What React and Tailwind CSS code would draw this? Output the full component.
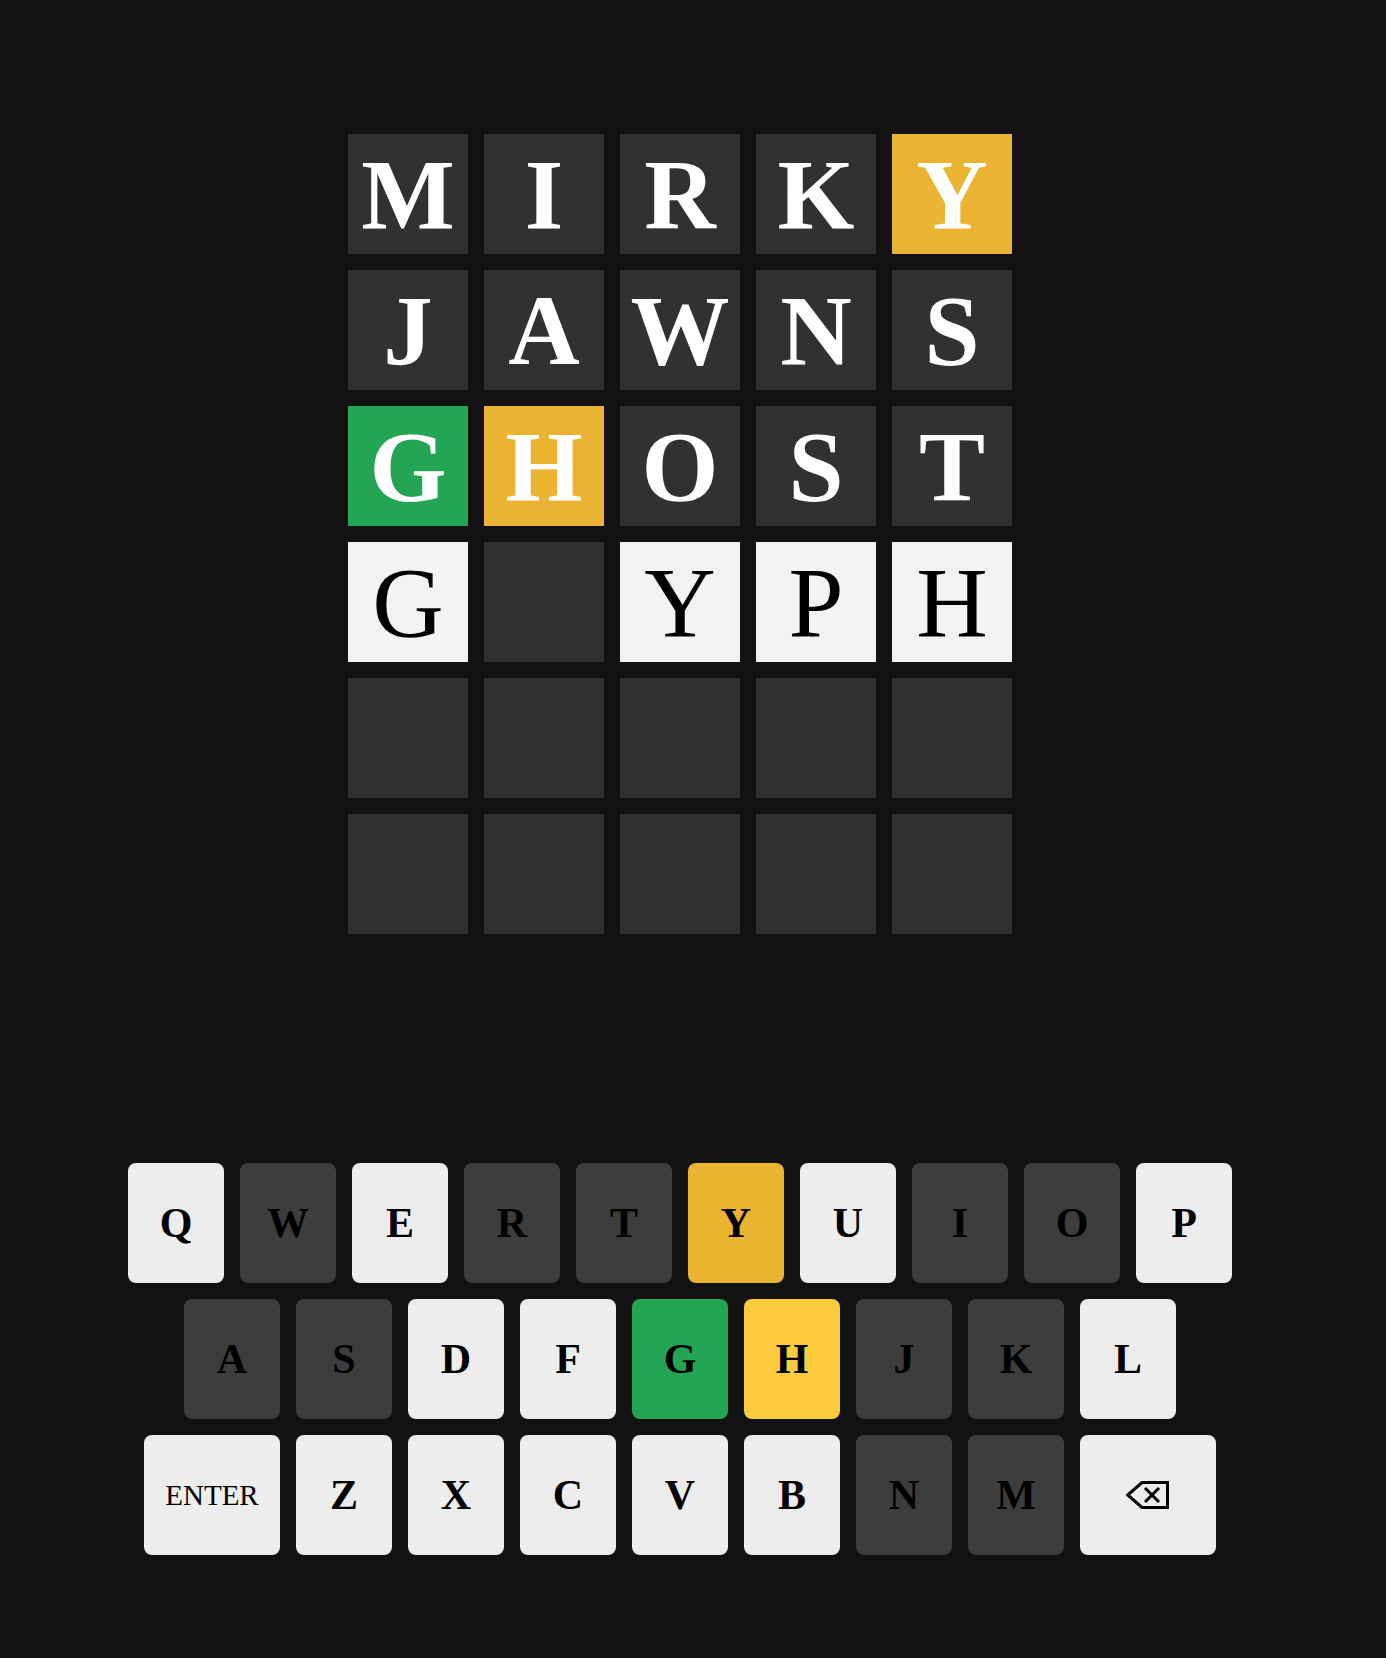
import React from "react";

const rows = [
  [["M","d"],["I","d"],["R","d"],["K","d"],["Y","y"]],
  [["J","d"],["A","d"],["W","d"],["N","d"],["S","d"]],
  [["G","g"],["H","y"],["O","d"],["S","d"],["T","d"]],
  [["G","l"],["","e"],["Y","l"],["P","l"],["H","l"]],
  [["","e"],["","e"],["","e"],["","e"],["","e"]],
  [["","e"],["","e"],["","e"],["","e"],["","e"]],
];

const tileCls = {
  d: "bg-[#313131] text-white font-bold",
  y: "bg-[#eab332] text-white font-bold",
  g: "bg-[#24a553] text-white font-bold",
  l: "bg-[#f3f3f3] text-black font-normal",
  e: "bg-[#313131]",
};

const keyCls = {
  l: "bg-[#ededed]",
  d: "bg-[#3d3d3d]",
  y: "bg-[#eab330]",
  h: "bg-[#fdcc3c]",
  g: "bg-[#24a553]",
};

const kb = [
  [["Q","l"],["W","d"],["E","l"],["R","d"],["T","d"],["Y","y"],["U","l"],["I","d"],["O","d"],["P","l"]],
  [["A","d"],["S","d"],["D","l"],["F","l"],["G","g"],["H","h"],["J","d"],["K","d"],["L","l"]],
  [["ENTER","l"],["Z","l"],["X","l"],["C","l"],["V","l"],["B","l"],["N","d"],["M","d"],["BACK","l"]],
];

function Backspace() {
  return (
    <svg width="44" height="28" viewBox="0 0 44 28" fill="none" stroke="#000" strokeWidth="3" strokeLinejoin="miter">
      <polygon points="16,1.5 41.5,1.5 41.5,26.5 16,26.5 1.8,14" />
      <line x1="19" y1="7" x2="33" y2="21" />
      <line x1="33" y1="7" x2="19" y2="21" />
    </svg>
  );
}

export default function App() {
  return (
    <div className="min-h-[1658px] bg-[#121212] font-['Liberation_Serif',serif]">
      <div className="w-[1360px] flex flex-col items-center pt-[134px]">
        <div className="flex flex-col gap-[16px]">
          {rows.map((r, i) => (
            <div key={i} className="flex gap-[16px]">
              {r.map(([ch, t], j) => (
                <div
                  key={j}
                  className={`w-[120px] h-[120px] flex items-center justify-center text-[99px] leading-none ${tileCls[t]}`}
                >
                  {ch}
                </div>
              ))}
            </div>
          ))}
        </div>
        <div className="mt-[229px] flex flex-col gap-[16px] items-center">
          {kb.map((r, i) => (
            <div key={i} className="flex gap-[16px]">
              {r.map(([ch, t], j) => {
                const wide = ch === "ENTER" || ch === "BACK";
                return (
                  <div
                    key={j}
                    className={`${wide ? "w-[136px]" : "w-[96px]"} h-[120px] rounded-lg flex items-center justify-center text-black ${keyCls[t]} ${ch === "ENTER" ? "text-[29px] font-normal" : "text-[42px] font-bold"} leading-none`}
                  >
                    {ch === "BACK" ? <Backspace /> : ch}
                  </div>
                );
              })}
            </div>
          ))}
        </div>
      </div>
    </div>
  );
}
